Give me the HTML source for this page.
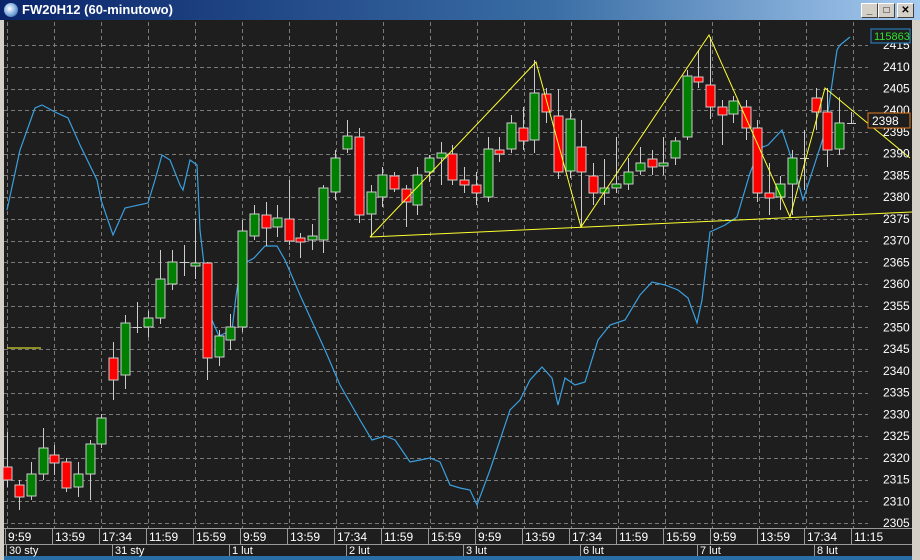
<!DOCTYPE html>
<html><head><meta charset="utf-8"><style>
*{margin:0;padding:0}
body{width:920px;height:560px;overflow:hidden;background:#d4d0c8;font-family:"Liberation Sans",sans-serif;position:relative}
#title{position:absolute;left:0;top:0;width:920px;height:20px;background:linear-gradient(90deg,#0a246a,#3a6ea5 60%,#a6caf0);color:#fff;font-weight:bold;font-size:13px;line-height:20px}
#title span{position:absolute;left:22px;top:0}
.ic{position:absolute;left:4px;top:3px;width:14px;height:14px;border-radius:50%;background:radial-gradient(circle at 40% 40%,#fff,#6a9ed8 60%,#234)}
.btn{position:absolute;top:3px;width:15px;height:13px;background:#d4d0c8;border:1px solid;border-color:#fff #404040 #404040 #fff;color:#000;font-size:10px;line-height:13px;text-align:center}
svg{position:absolute;left:0;top:20px}
</style></head><body>
<div id="title"><div class="ic"></div><span>FW20H12 (60-minutowo)</span>
<div class="btn" style="left:861px">_</div><div class="btn" style="left:878px">□</div><div class="btn" style="left:897px">✕</div></div>
<svg id="s" width="920" height="540" viewBox="0 20 920 540" xmlns="http://www.w3.org/2000/svg" font-family="Liberation Sans, sans-serif">
<rect x="0" y="20" width="920" height="540" fill="#1e1e1e"/>
<rect x="0" y="20" width="4" height="540" fill="#d4d0c8"/>
<rect x="912" y="20" width="8" height="540" fill="#d4d0c8"/>
<g id="grid" stroke="#7a7a7a" stroke-dasharray="4,3" stroke-width="1"></g>
<polyline fill="none" stroke="#3aa0e0" stroke-width="1.2" points="7,210 20,150 35,108 42,105 55,112 68,118 80,145 97,180 101,200 113,235 125,208 148,203 155,180 162,155 170,160 180,185 183,190 190,160 197,165 200,230 207,290 211,318 219,336 232,330 236,296 240,270 247,262 254,258 265,246 277,246 285,260 300,295 325,350 340,385 360,420 372,440 385,436 395,440 410,462 420,460 430,458 440,462 450,485 460,488 470,490 477,505 490,470 510,410 520,400 530,380 542,367 552,378 558,405 565,378 575,385 585,382 598,340 610,325 625,320 640,295 652,282 665,285 678,290 688,298 697,323 702,300 710,232 725,225 737,217 750,173 760,148 768,145 782,130 793,163 803,200 815,163 825,132 837,50 840,45 850,37"/>
<g id="c"></g>
<g stroke="#ffff30" stroke-width="1" fill="none">
<polyline points="370,237 536,62 581,227 709,35 790,217 825,88 910,158"/>
<line x1="370" y1="237" x2="912" y2="212"/>
<line x1="7" y1="348" x2="41" y2="348"/>
</g>
<g id="ax" fill="#fff" font-size="12"></g>
<rect x="871" y="29" width="39" height="14" fill="#1e1e1e" stroke="#2a8ad0"/>
<text x="874" y="40" fill="#30e030" font-size="11">115863</text>
<rect x="868" y="113" width="42" height="15" fill="#1e1e1e" stroke="#e07a20"/>
<text x="872" y="125" fill="#fff" font-size="12">2398</text>
<rect x="4" y="528" width="908" height="29" fill="#1e1e1e"/>
<line x1="4" y1="528.5" x2="912" y2="528.5" stroke="#999"/>
<line x1="4" y1="544.5" x2="912" y2="544.5" stroke="#999"/>
<rect x="4" y="556" width="908" height="4" fill="#2a6ea8"/>
<g id="tl" fill="#fff" font-size="12"></g>
</svg>
<script>
var NS="http://www.w3.org/2000/svg";
function el(p,t,a,txt){var e=document.createElementNS(NS,t);for(var k in a)e.setAttribute(k,a[k]);if(txt)e.textContent=txt;document.getElementById(p).appendChild(e);}
for(var x=7;x<870;x+=47)el("grid","line",{x1:x+.5,y1:22,x2:x+.5,y2:528});
for(var p=2305;p<=2415;p+=5){var y=523-(p-2305)*4.345;el("grid","line",{x1:4,y1:Math.round(y)+.5,x2:868,y2:Math.round(y)+.5});el("ax","text",{x:883,y:y+4},String(p));}
var C=[[7,432,467,480,487,'r'],[19,480,485,497,510,'r'],[31,462,474,496,500,'g'],[43,428,448,474,480,'g'],[54,445,455,463,475,'r'],[66,458,462,488,492,'r'],[78,462,474,487,497,'g'],[90,440,444,474,500,'g'],[101,414,418,444,448,'g'],[113,342,358,380,400,'r'],[125,315,323,375,389,'g'],[137,302,327,327,333,'x'],[148,311,318,327,337,'g'],[160,250,279,318,324,'g'],[172,250,262,284,290,'g'],[184,245,262,262,276,'x'],[195,219,263,266,279,'g'],[207,262,263,358,380,'r'],[219,330,336,357,366,'g'],[230,314,327,340,350,'g'],[242,220,231,327,332,'g'],[254,205,214,236,240,'g'],[266,202,215,228,246,'r'],[277,205,218,227,237,'g'],[289,180,219,241,245,'r'],[300,233,238,242,258,'r'],[312,224,236,240,250,'g'],[323,185,188,240,253,'g'],[335,150,158,192,200,'g'],[347,120,136,149,153,'g'],[359,128,137,215,223,'r'],[371,185,192,214,237,'g'],[382,167,175,197,207,'g'],[394,172,176,189,192,'r'],[406,185,189,202,227,'r'],[417,167,175,205,215,'g'],[429,155,158,172,182,'g'],[441,142,153,158,185,'g'],[452,145,154,180,185,'r'],[464,167,180,185,193,'r'],[476,172,185,193,205,'r'],[488,137,149,197,202,'g'],[499,137,150,154,162,'r'],[511,115,123,149,153,'g'],[523,107,128,141,150,'r'],[534,60,93,140,153,'g'],[546,88,94,112,123,'r'],[558,89,116,172,179,'r'],[570,110,119,171,178,'g'],[581,120,147,172,227,'r'],[593,163,176,193,205,'r'],[604,159,188,193,205,'g'],[616,137,184,188,193,'g'],[628,158,172,184,190,'g'],[640,147,163,171,175,'g'],[652,150,159,167,175,'r'],[663,137,163,166,175,'g'],[675,137,141,158,165,'g'],[687,70,76,137,140,'g'],[698,50,77,82,88,'r'],[710,37,85,107,119,'r'],[722,100,107,115,145,'r'],[733,96,101,114,123,'g'],[746,100,107,128,140,'r'],[757,120,128,193,202,'r'],[769,163,193,198,215,'r'],[780,176,184,197,210,'g'],[792,150,158,184,215,'g'],[804,130,158,158,190,'x'],[816,88,98,112,130,'r'],[827,88,112,150,167,'r'],[839,97,123,149,155,'g'],[851,112,123,123,123,'x']];
C.forEach(function(c){var x=c[0];el("c","line",{x1:x+.5,y1:c[1],x2:x+.5,y2:c[4],stroke:"#ccc"});
if(c[5]=='x'){el("c","line",{x1:x-4,y1:c[2]+.5,x2:x+5,y2:c[2]+.5,stroke:"#ccc"});}
else el("c","rect",{x:x-4,y:c[2],width:9,height:Math.max(2,c[3]-c[2]),fill:c[5]=='g'?"#008000":"#ff0000",stroke:"#ccc","stroke-width":1});});
var T=["9:59","13:59","17:34","11:59","15:59","9:59","13:59","17:34","11:59","15:59","9:59","13:59","17:34","11:59","15:59","9:59","13:59","17:34","11:15"];
T.forEach(function(t,i){var x=8+47*i;el("tl","text",{x:x,y:541},t);el("tl","line",{x1:x-2.5,y1:529,x2:x-2.5,y2:544,stroke:"#999"});});
[["30 sty",9],["31 sty",115],["1 lut",232],["2 lut",349],["3 lut",466],["6 lut",583],["7 lut",700],["8 lut",817]].forEach(function(d){el("tl","text",{x:d[1],y:554,"font-size":11},d[0]);el("tl","line",{x1:d[1]-2.5,y1:545,x2:d[1]-2.5,y2:556,stroke:"#999"});});
</script>
</body></html>
